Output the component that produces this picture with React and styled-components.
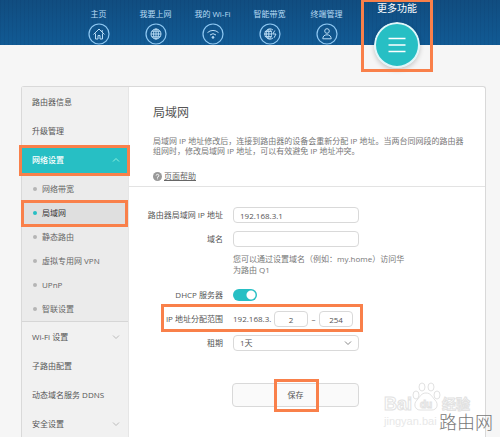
import { useState } from "react";
import styled, { createGlobalStyle } from "styled-components";

const colors = {
  teal: "#27bfc4",
  orange: "#f9804a",
  text: "#555",
  muted: "#777",
  line: "#d9d9d9",
};

const GlobalStyle = createGlobalStyle`
  * {
    box-sizing: border-box;
    margin: 0;
    padding: 0;
  }

  body {
    background: #f6f6f6;
    color: ${colors.text};
    font: 8px/10px "Open Sans", "Noto Sans CJK SC", sans-serif;
  }

  button, input, select {
    font: inherit;
    color: inherit;
  }
`;

const Page = styled.div`
  position: relative;
  display: flex;
  flex-direction: column;
  height: 100vh;
  overflow: hidden;
`;

const Header = styled.header`
  height: 45px;
  padding-left: 14%;
  background:
    repeating-linear-gradient(90deg, rgba(0, 20, 60, 0.06) 0 1px, transparent 1px 4px),
    linear-gradient(#114d80, #115a94);
`;

const Nav = styled.nav`
  display: flex;
  align-items: flex-start;
`;

const NavLink = styled.a`
  display: flex;
  flex-direction: column;
  align-items: center;
  gap: 4px;
  width: 57px;
  padding-top: 9px;
  color: #b9dcf5;
  text-decoration: none;
  white-space: nowrap;

  svg {
    width: 22px;
    height: 22px;
  }
`;

const MoreLink = styled.a`
  position: relative;
  display: flex;
  flex-direction: column;
  align-items: center;
  gap: 8px;
  width: 72px;
  height: 73px;
  margin-left: 6px;
  padding-top: 2px;
  color: #fff;
  font-size: 10px;
  line-height: 12px;
  text-decoration: none;

  svg {
    width: 46px;
    height: 46px;
    border-radius: 50%;
    box-shadow: 0 2px 5px rgba(0, 0, 0, 0.2);
  }
`;

const Marker = styled.span`
  position: absolute;
  inset: ${({ $inset }) => $inset || "0"};
  border: 3px solid ${colors.orange};
  pointer-events: none;
`;

const Panel = styled.div`
  display: flex;
  flex: 1;
  margin: 41px 14px 0 21px;
  border: 1px solid ${colors.line};
  border-bottom: 0;
  border-radius: 3px 3px 0 0;
  background: #fff;
`;

const Sidebar = styled.aside`
  width: 107px;
  flex: none;
  border-right: 1px solid #e6e6e6;
  background: #f1f1f1;
`;

const MenuLink = styled.a`
  position: relative;
  display: flex;
  align-items: center;
  justify-content: space-between;
  height: 29px;
  padding: 0 8px 0 10px;
  color: ${({ $open }) => ($open ? "#fff" : colors.text)};
  background: ${({ $open }) => ($open ? colors.teal : "transparent")};
  font-weight: ${({ $open }) => ($open ? 500 : 400)};
  text-decoration: none;
  white-space: nowrap;
`;

const SubMenu = styled.ul`
  padding-top: 3px;
  border-bottom: 1px solid #d6d6d6;
  background: #ebebeb;
  list-style: none;
`;

const SubLink = styled.a`
  position: relative;
  display: flex;
  align-items: center;
  gap: 5px;
  height: 24px;
  padding-left: 11px;
  color: ${({ $active }) => ($active ? "#333" : "#666")};
  background: ${({ $active }) => ($active ? "#dfdfdf" : "transparent")};
  text-decoration: none;

  &::before {
    content: "";
    width: 4px;
    height: 4px;
    border-radius: 50%;
    background: ${({ $active }) => ($active ? colors.teal : "#b5b5b5")};
  }
`;

const Content = styled.main`
  flex: 1;
  min-width: 0;
`;

const Intro = styled.section`
  height: 100px;
  padding: 18px 0 0 24px;
  border-bottom: 1px solid #e3e3e3;
`;

const Title = styled.h1`
  font-size: 12px;
  line-height: 16px;
  font-weight: 400;
`;

const Description = styled.p`
  margin: 15px 0;
  color: ${colors.muted};
  white-space: nowrap;
`;

const HelpLink = styled.a`
  display: inline-flex;
  align-items: center;
  gap: 2px;
  color: #666;

  svg {
    width: 9px;
    height: 9px;
  }
`;

const Form = styled.form`
  display: flex;
  flex-direction: column;
  gap: 8px;
  padding-top: 20px;
`;

const Row = styled.div`
  position: relative;
  display: flex;
  align-items: center;
  gap: 10px;
  height: 16px;
`;

const Label = styled.label`
  width: 94px;
  flex: none;
  text-align: right;
  white-space: nowrap;
`;

const Input = styled.input`
  width: ${({ $small }) => ($small ? "34px" : "126px")};
  height: 16px;
  padding: 0 6px;
  border: 1px solid ${colors.line};
  border-radius: 4px;
  background: #fff;
  text-align: ${({ $small }) => ($small ? "center" : "left")};
  outline: none;
`;

const Hint = styled.p`
  width: 174px;
  margin: -2px 0 4px 104px;
  color: ${colors.muted};
  line-height: 11px;
`;

const Switch = styled.input`
  appearance: none;
  width: 24px;
  height: 12px;
  border-radius: 6px;
  background: radial-gradient(circle at 6px 6px, #fff 4px, transparent 5px), #bbb;

  &:checked {
    background: radial-gradient(circle at 18px 6px, #fff 4px, transparent 5px), ${colors.teal};
  }
`;

const Range = styled.div`
  display: flex;
  align-items: center;

  span {
    width: 41px;
  }

  i {
    width: 11px;
    font-style: normal;
    text-align: center;
  }
`;

const SelectBox = styled.div`
  display: grid;
  align-items: center;
  width: 126px;

  select, svg {
    grid-area: 1 / 1;
  }

  select {
    appearance: none;
    height: 16px;
    padding: 0 6px;
    border: 1px solid ${colors.line};
    border-radius: 4px;
    background: #fff;
  }

  svg {
    justify-self: end;
    margin-right: 7px;
    pointer-events: none;
  }
`;

const SaveButton = styled.button`
  position: relative;
  width: 127px;
  height: 24px;
  margin: 24px 0 0 103px;
  border: 1px solid ${colors.line};
  border-radius: 4px;
  background: #fafafa;
`;

const Watermark = styled.div`
  position: absolute;
  right: 26px;
  bottom: 3px;

  svg {
    display: block;
    width: 92px;
    height: 55px;
  }
`;

const SiteName = styled.div`
  position: absolute;
  right: 7px;
  bottom: 4px;
  color: #777;
  font-size: 18px;
  line-height: 22px;
  font-weight: 300;
`;

const glyphs = {
  home: <path d="M5.5 11.5 11 6l5.5 5.5M7.5 10.5V16h2.5v-3.5h2V16h2.5v-5.5M14.2 7v2" />,
  globe: (
    <>
      <circle cx="11" cy="11" r="5" />
      <ellipse cx="11" cy="11" rx="2.4" ry="5" />
      <path d="M6 11h10M6.8 8.2h8.4M6.8 13.8h8.4M11 6v10" />
    </>
  ),
  wifi: (
    <>
      <path d="M5.5 9.6a8 8 0 0 1 11 0M8 12a4.5 4.5 0 0 1 6 0" />
      <circle cx="11" cy="14.4" r=".9" fill="currentColor" />
    </>
  ),
  band: (
    <>
      <path d="M14 7a5 5 0 1 0 0 8M5 11h8M5.8 8.4h7M5.8 13.6h7M9.8 6v10" />
      <path d="M10.5 6c3 2.5 3 7.5 0 10M9.5 6c-3 2.5-3 7.5 0 10" />
      <path d="m15.8 7.5-2 3.5H17l-2 3.8" />
    </>
  ),
  user: (
    <>
      <circle cx="11" cy="8" r="2.3" />
      <path d="M6.8 15.8c0-2.6 1.6-4 4.2-4s4.2 1.4 4.2 4z" />
    </>
  ),
};

const navItems = [
  { title: "主页", icon: "home" },
  { title: "我要上网", icon: "globe" },
  { title: "我的 Wi-Fi", icon: "wifi" },
  { title: "智能带宽", icon: "band" },
  { title: "终端管理", icon: "user" },
];

const subItems = ["网络带宽", "局域网", "静态路由", "虚拟专用网 VPN", "UPnP", "智联设置"];

function NavIcon({ name }) {
  return (
    <svg viewBox="0 0 22 22" fill="none" stroke="currentColor" strokeWidth="1">
      <circle cx="11" cy="11" r="10" stroke="#8fc8f2" strokeWidth="1.2" />
      {glyphs[name]}
    </svg>
  );
}

function Chevron({ up, color = "#bbb" }) {
  return (
    <svg width="8" height="6" viewBox="0 0 8 6" fill="none" stroke={color}>
      <path d={up ? "M1 4.5 4 1.5l3 3" : "M1 1.5l3 3 3-3"} />
    </svg>
  );
}

function App() {
  const [ip, setIp] = useState("192.168.3.1");
  const [domain, setDomain] = useState("");
  const [dhcp, setDhcp] = useState(true);
  const [start, setStart] = useState("2");
  const [end, setEnd] = useState("254");

  return (
    <Page>
      <GlobalStyle />
      <Header>
        <Nav>
          {navItems.map(({ title, icon }) => (
            <NavLink href="#" key={title}>
              {title}
              <NavIcon name={icon} />
            </NavLink>
          ))}
          <MoreLink href="#">
            更多功能
            <svg viewBox="0 0 46 46" fill="none" stroke="#fff">
              <circle cx="23" cy="23" r="22" fill={colors.teal} stroke="#dff6fa" strokeWidth="2" />
              <path d="M14.5 16.5h17M14.5 23h17M14.5 29.5h17" strokeWidth="1.5" />
            </svg>
            <Marker $inset="-1px 0 1px" />
          </MoreLink>
        </Nav>
      </Header>

      <Panel>
        <Sidebar>
          <MenuLink href="#">路由器信息</MenuLink>
          <MenuLink href="#">升级管理</MenuLink>
          <MenuLink href="#" $open>
            网络设置
            <Chevron up color="#8ff0dc" />
            <Marker $inset="0 -2px -2px -3px" />
          </MenuLink>
          <SubMenu>
            {subItems.map((title) => (
              <li key={title}>
                <SubLink href="#" $active={title === "局域网"}>
                  {title}
                  {title === "局域网" && <Marker $inset="-1px 0 -2px -1px" />}
                </SubLink>
              </li>
            ))}
          </SubMenu>
          <MenuLink href="#">
            Wi-Fi 设置
            <Chevron />
          </MenuLink>
          <MenuLink href="#">子路由配置</MenuLink>
          <MenuLink href="#">动态域名服务 DDNS</MenuLink>
          <MenuLink href="#">
            安全设置
            <Chevron />
          </MenuLink>
        </Sidebar>

        <Content>
          <Intro>
            <Title>局域网</Title>
            <Description>
              局域网 IP 地址修改后，连接到路由器的设备会重新分配 IP 地址。当两台同网段的路由器
              <br />
              组网时，修改局域网 IP 地址，可以有效避免 IP 地址冲突。
            </Description>
            <HelpLink href="#">
              <svg viewBox="0 0 10 10" fill="none">
                <circle cx="5" cy="5" r="5" fill="#999" />
                <path d="M3.5 4a1.5 1.5 0 1 1 1.5 1.6v.8M5 7.2v.9" stroke="#fff" />
              </svg>
              页面帮助
            </HelpLink>
          </Intro>

          <Form onSubmit={(e) => e.preventDefault()}>
            <Row>
              <Label htmlFor="ip">路由器局域网 IP 地址</Label>
              <Input id="ip" value={ip} onChange={(e) => setIp(e.target.value)} />
            </Row>
            <Row>
              <Label htmlFor="domain">域名</Label>
              <Input id="domain" value={domain} onChange={(e) => setDomain(e.target.value)} />
            </Row>
            <Hint>
              您可以通过设置域名（例如：my.home）访问华
              <br />
              为路由 Q1
            </Hint>
            <Row>
              <Label htmlFor="dhcp">DHCP 服务器</Label>
              <Switch
                id="dhcp"
                type="checkbox"
                checked={dhcp}
                onChange={(e) => setDhcp(e.target.checked)}
              />
            </Row>
            <Row>
              <Label htmlFor="start">IP 地址分配范围</Label>
              <Range>
                <span>192.168.3.</span>
                <Input id="start" $small value={start} onChange={(e) => setStart(e.target.value)} />
                <i>–</i>
                <Input
                  aria-label="IP 地址分配范围"
                  $small
                  value={end}
                  onChange={(e) => setEnd(e.target.value)}
                />
              </Range>
              <Marker $inset="-7px 122px -5px 32px" />
            </Row>
            <Row>
              <Label htmlFor="lease">租期</Label>
              <SelectBox>
                <select id="lease">
                  <option>1天</option>
                </select>
                <Chevron color="#888" />
              </SelectBox>
            </Row>
            <SaveButton type="submit">
              保存
              <Marker $inset="-5px 39px -6px 41px" />
            </SaveButton>
          </Form>
        </Content>
      </Panel>

      <Watermark>
        <svg viewBox="0 0 92 55" fill="#fff" stroke="#e2e2e2" strokeWidth="1">
          <ellipse cx="34" cy="16" rx="3" ry="4" />
          <ellipse cx="40" cy="8" rx="3" ry="4" />
          <ellipse cx="49" cy="8" rx="3" ry="4" />
          <ellipse cx="55" cy="16" rx="3" ry="4" />
          <path d="M44 14c5 0 6 4 9 7 4 4 2 10-3 10H38c-5 0-7-6-3-10 3-3 4-7 9-7z" />
          <g fontFamily="Liberation Sans, Noto Sans CJK SC, sans-serif" fontWeight="700">
            <text x="2" y="31" fontSize="18">Bai</text>
            <text x="38" y="29" fontSize="10">du</text>
            <text x="60" y="30" fontSize="14">经验</text>
            <text x="2" y="46" fontSize="11" fontWeight="400" stroke="none" fill="#e8e8e8">
              jingyan.bai
            </text>
          </g>
        </svg>
      </Watermark>
      <SiteName>路由网</SiteName>
    </Page>
  );
}

export default App;
